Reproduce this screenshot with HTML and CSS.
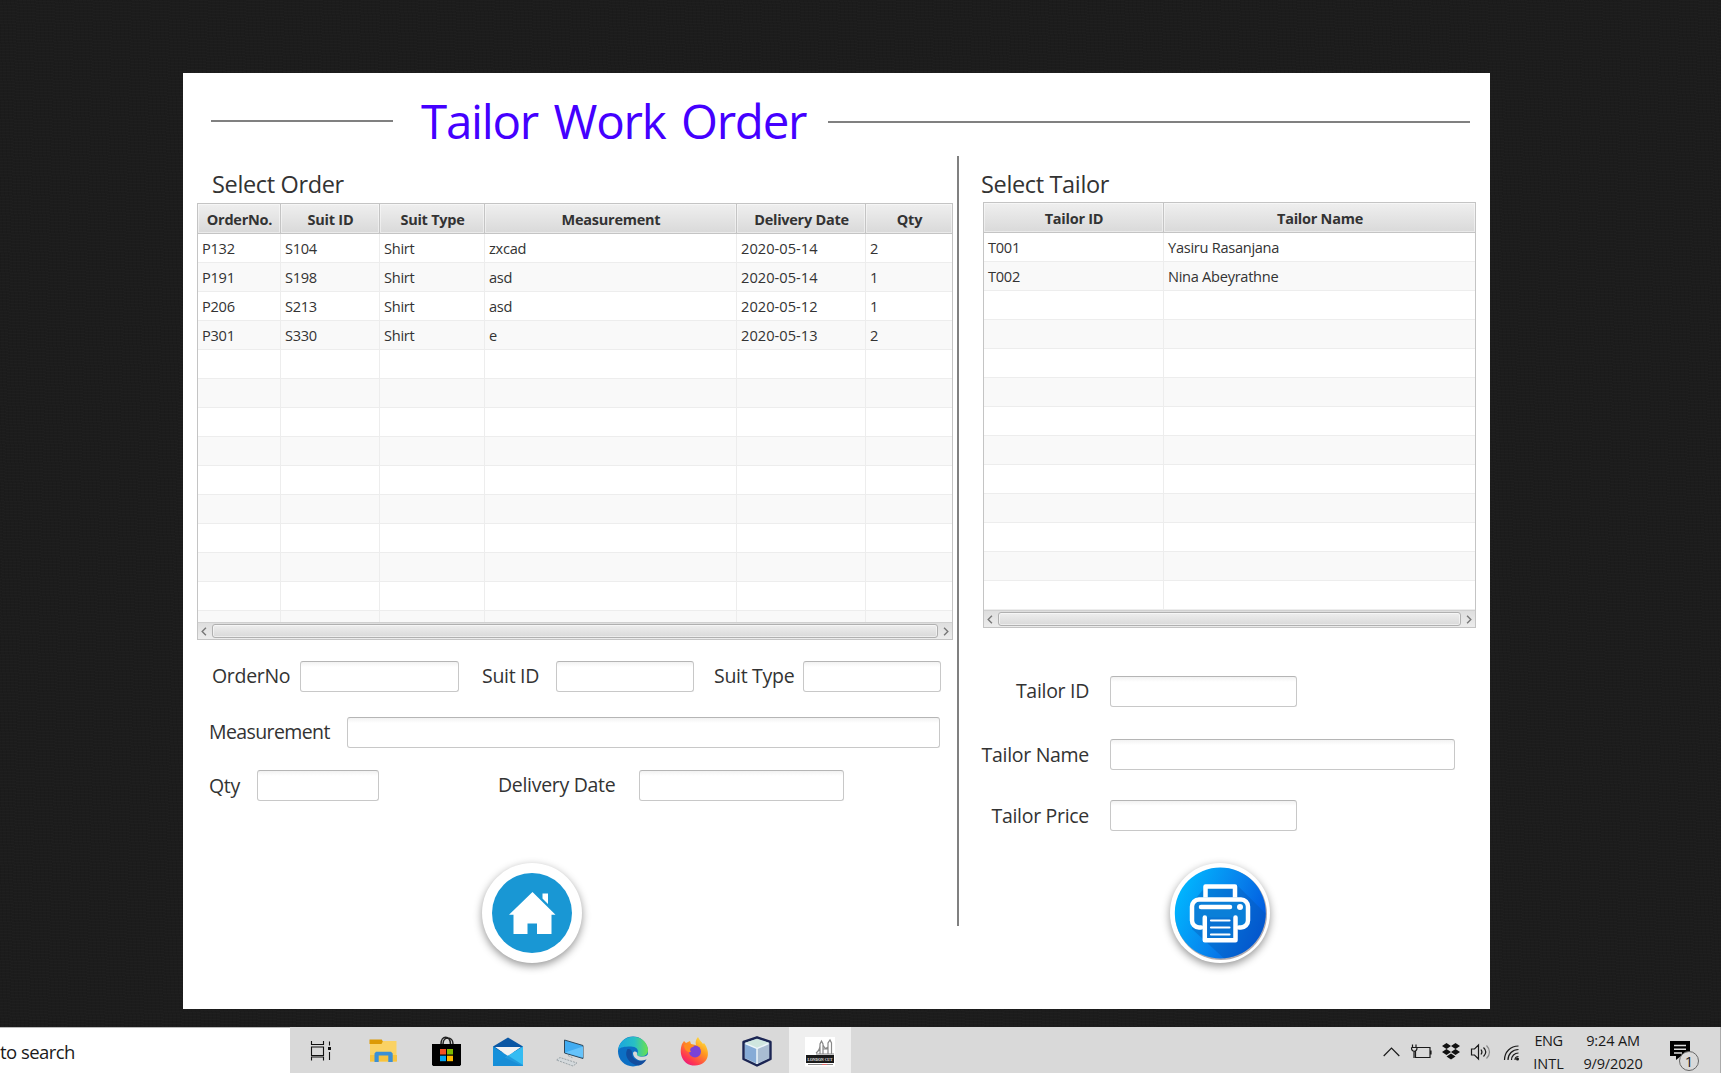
FILE: index.html
```html
<!DOCTYPE html>
<html lang="en">
<head>
<meta charset="utf-8">
<title>Tailor Work Order</title>
<link rel="stylesheet" href="styles.css">
</head>
<body>
<main class="desktop">
  <section class="window">
    <header class="title-bar">
      <span class="rule rule-left"></span>
      <h1 class="title">Tailor Work Order</h1>
      <span class="rule rule-right"></span>
    </header>
    <div class="panes">
      <section class="pane pane-order">
        <h2 class="heading heading-order">Select Order</h2>
        <div class="grid grid-order">
          <div class="grid-view">
            <table>
              <colgroup><col class="c-no"><col class="c-suit"><col class="c-type"><col class="c-measure"><col class="c-date"><col></colgroup>
              <thead><tr><th>OrderNo.<th>Suit ID<th>Suit Type<th>Measurement<th>Delivery Date<th>Qty</tr></thead>
              <tbody>
                <tr><td>P132<td>S104<td>Shirt<td>zxcad<td class="date">2020-05-14<td>2</tr>
                <tr><td>P191<td>S198<td>Shirt<td>asd<td class="date">2020-05-14<td>1</tr>
                <tr><td>P206<td>S213<td>Shirt<td>asd<td class="date">2020-05-12<td>1</tr>
                <tr><td>P301<td>S330<td>Shirt<td>e<td class="date">2020-05-13<td>2</tr>
                <tr><td><td><td><td><td><td></tr>
                <tr><td><td><td><td><td><td></tr>
                <tr><td><td><td><td><td><td></tr>
                <tr><td><td><td><td><td><td></tr>
                <tr><td><td><td><td><td><td></tr>
                <tr><td><td><td><td><td><td></tr>
                <tr><td><td><td><td><td><td></tr>
                <tr><td><td><td><td><td><td></tr>
                <tr><td><td><td><td><td><td></tr>
                <tr><td><td><td><td><td><td></tr>
              </tbody>
            </table>
          </div>
          <div class="scrollbar">
            <svg class="arrow" viewBox="0 0 14 16"><path d="M8 4L4 8l4 4"/></svg>
            <span class="thumb"></span>
            <svg class="arrow" viewBox="0 0 14 16"><path d="M6 4l4 4-4 4"/></svg>
          </div>
        </div>
        <form class="form-order">
          <div class="row row-ids">
            <label class="l-no">OrderNo</label><input class="i-no">
            <label class="l-suit">Suit ID</label><input class="i-suit">
            <label class="l-type">Suit Type</label><input class="i-type">
          </div>
          <div class="row row-measure">
            <label class="l-measure">Measurement</label><input class="i-measure">
          </div>
          <div class="row row-qty">
            <label class="l-qty">Qty</label><input class="i-qty">
            <label class="l-date">Delivery Date</label><input class="i-date">
          </div>
        </form>
        <button class="round home" aria-label="Home">
          <svg viewBox="0 0 100 100"><circle cx="50" cy="50" r="40" fill="#1997d4"/><path fill="#fff" d="M50.500 29L73.500 51.700H69.500V71H55V60.500H45.500V71H31.500V51.700H27zM60.500 30.500H66V41l-5.500-5.500z"/></svg>
        </button>
      </section>
      <span class="divider"></span>
      <section class="pane pane-tailor">
        <h2 class="heading heading-tailor">Select Tailor</h2>
        <div class="grid grid-tailor">
          <div class="grid-view">
            <table>
              <colgroup><col class="c-tid"><col></colgroup>
              <thead><tr><th>Tailor ID<th>Tailor Name</tr></thead>
              <tbody>
                <tr><td>T001<td>Yasiru Rasanjana</tr>
                <tr><td>T002<td>Nina Abeyrathne</tr>
                <tr><td><td></tr>
                <tr><td><td></tr>
                <tr><td><td></tr>
                <tr><td><td></tr>
                <tr><td><td></tr>
                <tr><td><td></tr>
                <tr><td><td></tr>
                <tr><td><td></tr>
                <tr><td><td></tr>
                <tr><td><td></tr>
                <tr><td><td></tr>
              </tbody>
            </table>
          </div>
          <div class="scrollbar">
            <svg class="arrow" viewBox="0 0 14 16"><path d="M8 4L4 8l4 4"/></svg>
            <span class="thumb"></span>
            <svg class="arrow" viewBox="0 0 14 16"><path d="M6 4l4 4-4 4"/></svg>
          </div>
        </div>
        <form class="form-tailor">
          <div class="row"><label>Tailor ID</label><input class="i-short"></div>
          <div class="row row-name"><label>Tailor Name</label><input class="i-long"></div>
          <div class="row row-price"><label>Tailor Price</label><input class="i-short"></div>
        </form>
        <button class="round print" aria-label="Print">
          <svg viewBox="0 0 100 100">
            <defs>
              <linearGradient id="pg" x1="0" y1=".3" x2="1" y2=".75"><stop offset="0" stop-color="#00b7ff"/><stop offset=".5" stop-color="#0786ee"/><stop offset="1" stop-color="#0052dc"/></linearGradient>
              <clipPath id="pc"><circle cx="50.300" cy="50" r="45.500"/></clipPath>
            </defs>
            <circle cx="51" cy="51" r="46" fill="#8d8790" opacity=".7"/>
            <circle cx="50.300" cy="50" r="45.500" fill="url(#pg)"/>
            <path clip-path="url(#pc)" fill="#0757b5" opacity=".4" d="M67 22L110 65V110H70L22 66V40L36 23z"/>
            <rect x="24" y="36" width="54" height="28" rx="8" fill="#0a7fd8"/>
            <g fill="none" stroke="#fff" stroke-width="4.500">
              <path d="M35.500 34.500V23.500H65v11" stroke-linejoin="round"/>
              <path d="M31 64.500h-2a7 7 0 0 1-7-7V43.500a7 7 0 0 1 7-7H71a7 7 0 0 1 7 7V57.500a7 7 0 0 1-7 7H69" stroke-linecap="round"/>
              <path d="M31 44H60" stroke-linecap="round"/>
              <path d="M34.800 54.500V77.200H65.500V54.500" fill="#0872d3" stroke-linecap="round" stroke-linejoin="round"/>
              <path d="M41 57.500H59.500M41 64.500H59.500M41 71.500H59.500" stroke-width="2.200" stroke-linecap="round"/>
            </g>
            <circle cx="70" cy="44" r="3" fill="#fff"/>
          </svg>
        </button>
      </section>
    </div>
  </section>
</main>
<footer class="taskbar">
  <div class="search">to search</div>
  <nav class="apps">
    <span class="app"><svg viewBox="0 0 32 32"><g fill="none" stroke="#111" stroke-width="1.100"><path d="M6.500 6v3.500H18.500V6M6.500 25.500V22H18.500v3.500M6.500 12h12v8.500h-12zM24.500 6.500v4M24.500 17v8"/></g><path d="M23 12h3v3h-3z" fill="#111"/></svg></span>
    <span class="app"><svg viewBox="0 0 32 32"><path fill="#fad264" d="M3 6h26.500v20.500H3z"/><path fill="#f7c33e" d="M3 20h27v6.500H3z"/><path fill="#dc9a05" d="M2.500 4.500h12.300l1 2-1.300 2.500h-12z"/><path fill="#3b90d6" d="M7.500 27V18.500l1.500-1.800h15l1.700 1.800V27h-4.400v-6.500h-9.600V27z"/></svg></span>
    <span class="app"><svg viewBox="0 0 32 32"><path fill="none" stroke="#222" stroke-width="1.500" d="M11 9c0-9 9-9 9.500 0M13 9c0-8 10-8 10 0"/><path d="M2 9h29v20.500l-1 1.500H3l-1-1.500z"/><path fill="#f25022" d="M10 14h6v5.500h-6z"/><path fill="#7fba00" d="M17 14h6v5.500h-6z"/><path fill="#00a4ef" d="M10 20.700h6v5.500h-6z"/><path fill="#ffb900" d="M17 20.700h6v5.500h-6z"/></svg></span>
    <span class="app"><svg viewBox="0 0 32 32"><path fill="#0b57a4" d="M1 11.500L16 2.500l15 9-4 6H5z"/><path fill="#f3f3f3" d="M3 12h26L16 21z"/><path fill="#1590da" d="M1 11.500l15 9.500 15-9.500V31H1z"/><path fill="#35bcf2" d="M31 11.500L13 22.500 30.500 31H31z"/><path fill="#1a8bd4" d="M16 20.500L31 30v1H1z" opacity=".7"/></svg></span>
    <span class="app"><svg viewBox="0 0 32 32"><path fill="#41acf2" stroke="#31485a" d="M10.500 5l18.500 5.500v13L10.500 18z"/><path d="M11 17.500l18-6v11z" fill="#66c3fa"/><path fill="#d4d9dc" stroke="#8b959b" stroke-width=".8" stroke-dasharray="2 1" d="M2.500 25L6 22.500 23 28l-4 3zM14 20.500l5 2.500"/></svg></span>
    <span class="app"><svg viewBox="0 0 32 32"><defs><linearGradient id="eg" x1="0" x2="1"><stop stop-color="#1aa5df"/><stop offset=".55" stop-color="#28bfc4"/><stop offset="1" stop-color="#6be24b"/></linearGradient></defs><circle cx="16" cy="16.500" r="15" fill="#0c6fc4"/><path fill="url(#eg)" d="M1.200 15C3-2 28-3 31 14c.6 5-3 7.500-7 7.500-3 0-5-1-4-2.500 3-5-2-8-7-7.500C8 11.500 3 12 1.200 15z"/><path fill="#124d9e" d="M10.500 14C6 22 14 30 22 30.500c4-1 6.500-4 7.500-6.500-7 4-15 1-14.500-6 .3-3-2-4.500-4.500-4z"/><path fill="#d9d9d9" d="M16 18c0-2 4.500-2.500 4 .8-.6 2 2 3 5 3 2.500 0 4.500-.8 6-2 1 3-1 4-2.500 5-6 2.500-12.500-1.500-12.500-6.800z"/></svg></span>
    <span class="app"><svg viewBox="0 0 32 32"><defs><linearGradient id="fg" x1=".9" y1="0" x2=".2" y2="1"><stop stop-color="#fff04a"/><stop offset=".4" stop-color="#ff9a1f"/><stop offset=".8" stop-color="#ff3750"/><stop offset="1" stop-color="#e4178a"/></linearGradient></defs><path fill="url(#fg)" d="M3 9l2-3 2 2 4-2 1 3 5 1c-1-3 0-6 2-8 1 3 4 5 5 7l1-1c7 9 5 22-9 22.500C5 31-1 20 3 9z"/><circle cx="16" cy="16.500" r="6" fill="#7a42d8"/><path fill="#ff8b20" d="M5 10c5-3 9 0 10 2-3 0-5 2-3 5-4 1-7-3-7-7z"/></svg></span>
    <span class="app"><svg viewBox="0 0 32 32"><path fill="#b9cddd" stroke="#1b2553" stroke-width="2.400" stroke-linejoin="round" d="M16 2.300L29.500 7v17L16 30.500 2.500 24V7z"/><path fill="#cfe6df" d="M4 7.800L16 4l12 3.800-12 5z"/><path fill="#86abd6" d="M4 8.500l12 5V28.500L4 23z"/><path fill="#a9bdd2" d="M28 8.500l-12 5V28.500L28 23z"/><path d="M16 13v16M4.500 8.500l11.500 5 11.500-5" stroke="#edf6fa" fill="none" stroke-width="1.500"/></svg></span>
    <span class="app active"><svg viewBox="0 0 32 32"><path fill="#fff" d="M1 2h30v29.500H1z"/><path fill="none" stroke="#888" stroke-width="1.200" d="M16 19V9l1.500-3L19 9v10M24 19V8l2-3 1.500 3v11M12 18c3-2 4-5 4-8M19 10c2 4 3 4 5 2M19 14h5M12 19h18"/><path fill="#1a1a1a" d="M2 20h28v8H2z"/><text class="logo-text" x="3.500" y="26" textLength="25" lengthAdjust="spacingAndGlyphs">LONDON CUT</text><path stroke="#888" d="M4 29.500h14"/><path stroke="#e06a6a" d="M18 29.500h5"/><path stroke="#888" d="M23 29.500h6"/></svg></span>
  </nav>
  <div class="tray">
    <svg class="tray-icons" viewBox="0 0 142 46" fill="none" stroke="#1a1a1a" stroke-width="1.200">
      <path d="M.700 29l7.800-8 7.800 8"/>
      <path d="M34 20.500h13v10H32.500V24M48 23.500v4M29.500 17.500v3M33 17.500v3M28.500 20.500h5.500c0 5-5.500 5-5.500 0M31 24v7"/>
      <path fill="#111" stroke="none" d="M63.500 16l4.500 3-4.500 3-4.500-3zM72.500 16l4.500 3-4.500 3-4.500-3zM63.500 22l4.500 3-4.500 3-4.500-3zM72.500 22l4.500 3-4.500 3-4.500-3zM68 26.500l4.500 3-4.500 3-4.500-3z"/>
      <path d="M88.500 22h3l4-4v14l-4-4h-3zM98 22.500c1.500 2 1.500 3 0 5M100.500 20.500c3 3 3 6 0 9"/><path stroke="#888" d="M103.500 18.500c4 4 4 9 0 13"/>
      <path d="M121.500 33c0-8 6-14 14-14M125 33c0-6 4.500-10.500 10.500-10.500M128.500 33c0-4 3-7 7-7M132 33c0-2 1.500-3.500 3.500-3.500"/><circle cx="134.500" cy="32" r="1.500" fill="#111" stroke="none"/>
    </svg>
    <div class="lang"><span class="eng">ENG</span><span>INTL</span></div>
    <div class="clock"><span>9:24 AM</span><span>9/9/2020</span></div>
    <div class="notice">
      <svg viewBox="0 0 32 32"><path d="M1 2h20v15h-9l-5 4v-4H1z"/><path stroke="#ddd" stroke-width="1.500" d="M5 6.500h12M5 10.200h12M5 13.900h8"/></svg>
      <span class="badge">1</span>
    </div>
  </div>
</footer>
</body>
</html>
```
FILE: styles.css
```css
* { box-sizing: border-box; }
body {
  margin: 0;
  width: 1721px;
  height: 1073px;
  overflow: hidden;
  display: flex;
  flex-direction: column;
  font-family: "Open Sans", "Noto Sans", sans-serif;
  color: #333;
}
.desktop {
  height: 1027px;
  padding: 73px 0 0 183px;
  background:
    repeating-linear-gradient(3deg, rgba(255,255,255,.012) 0 1px, transparent 1px 3px),
    repeating-linear-gradient(87deg, rgba(0,0,0,.06) 0 1px, transparent 1px 4px),
    #1c1c1c;
}
.window { width: 1307px; height: 936px; background: #fff; }
.title-bar { display: flex; height: 83px; padding-left: 28px; }
.rule { height: 2px; background: #808080; }
.rule-left { width: 182px; margin-top: 47px; }
.rule-right { width: 642px; margin-top: 48px; }
.title {
  width: 435px;
  margin: 12px 0 0;
  padding-left: 28px;
  font-size: 47.500px;
  line-height: 71px;
  font-weight: 400;
  letter-spacing: -1.250px;
  word-spacing: 4.500px;
  color: #40f;
  white-space: nowrap;
}
.panes { display: flex; }
.pane-order { width: 774px; padding-left: 14px; }
.divider { width: 2px; height: 770px; background: #808080; }
.pane-tailor { width: 531px; padding-left: 24px; }
.heading {
  margin: 0;
  font-size: 23.500px;
  line-height: 32px;
  font-weight: 400;
  letter-spacing: -.35px;
  white-space: nowrap;
}
.heading-order { height: 47px; padding: 12px 0 0 15px; }
.heading-tailor { height: 46px; margin-left: -2px; padding-top: 12px; }

.grid { border: 1px solid #c4c4c4; }
.grid-order { width: 756px; }
.grid-tailor { width: 493px; }
.grid-view { overflow: hidden; }
.grid-order .grid-view { height: 418px; }
.grid-tailor .grid-view { height: 407px; }
table { width: 100%; table-layout: fixed; border-collapse: separate; border-spacing: 0; }
.c-no { width: 83px; }
.c-suit { width: 99px; }
.c-type { width: 105px; }
.c-measure { width: 252px; }
.c-date { width: 129px; }
.c-tid { width: 180px; }
th, td { border: 0 solid #ededed; border-width: 0 1px 1px 0; white-space: nowrap; }
th {
  height: 30px;
  padding: 2px 0 0 1px;
  border-color: #c4c4c4;
  background: linear-gradient(#efefef, #d9d9d9);
  box-shadow: inset 0 0 0 1px rgba(255,255,255,.45);
  font-size: 14.500px;
  line-height: 20px;
  letter-spacing: -.25px;
}
td { height: 29px; padding: 0 0 0 4px; font-size: 14.600px; line-height: 20px; letter-spacing: -.28px; }
.date { letter-spacing: .05px; }
th:last-child, td:last-child { border-right: 0; }
tbody tr:nth-child(even) { background: #f9f9f9; }
.scrollbar {
  display: flex;
  height: 17px;
  padding: 1px 0 0;
  border-top: 1px solid #d0d0d0;
  background: linear-gradient(#dedede, #ececec);
}
.arrow { width: 14px; height: 15px; fill: none; stroke: #777; stroke-width: 1.500; }
.thumb {
  flex: 1;
  height: 14px;
  border: 1px solid #b0b0b0;
  border-radius: 3px;
  background: linear-gradient(#eee, #d9d9d9);
  box-shadow: inset 0 0 0 1px rgba(255,255,255,.5);
}

.row {
  display: flex;
  height: 31px;
  font-size: 19.500px;
  line-height: 29px;
  letter-spacing: -.3px;
  white-space: nowrap;
}
input {
  height: 31px;
  padding: 0 8px;
  border: 1px solid #c8c8c8;
  border-top-color: #b5b5b5;
  border-radius: 3px;
  background: linear-gradient(#f2f2f2, #fff 5px);
}
.form-order { padding: 21px 0 0 12px; }
.row-measure { margin-top: 25px; }
.row-qty { margin-top: 22px; }
.l-no { width: 91px; padding-left: 3px; }
.i-no { width: 159px; }
.l-suit { width: 97px; padding-left: 23px; }
.i-suit { width: 138px; }
.l-type { width: 109px; padding-left: 20px; }
.i-type { width: 138px; }
.l-measure { width: 138px; letter-spacing: -.6px; }
.i-measure { width: 593px; }
.l-qty { width: 48px; line-height: 31px; }
.i-qty { width: 122px; }
.l-date { width: 260px; padding-left: 119px; }
.i-date { width: 205px; }
.form-tailor { padding-top: 48px; }
.form-tailor label { display: flex; justify-content: flex-end; width: 106px; }
.form-tailor input { margin-left: 21px; }
.row-name { margin-top: 32px; line-height: 31px; }
.row-price { margin-top: 30px; line-height: 31px; }
.i-short { width: 187px; }
.i-long { width: 345px; }

.round {
  display: block;
  width: 100px;
  height: 100px;
  padding: 0;
  border: 0;
  border-radius: 50%;
  background: #fff;
  box-shadow: 0 3px 9px rgba(0,0,0,.42);
}
.round svg { display: block; width: 100px; height: 100px; }
.home { margin: 62px 0 0 285px; }
.print { margin: 32px 0 0 187px; }

.taskbar { display: flex; height: 46px; background: #d9d9d9; color: #1a1a1a; }
.search {
  width: 290px;
  height: 46px;
  border-top: 1px solid #bbb;
  background: #fff;
  font-size: 18.500px;
  line-height: 48px;
  letter-spacing: -.55px;
  white-space: nowrap;
}
.apps { display: flex; width: 561px; }
.app { display: flex; align-items: center; justify-content: center; flex: 1; height: 46px; padding-top: 2px; }
.app svg { width: 32px; height: 32px; overflow: visible; }
.active { background: #efefef; }
.logo-text { font: bold 5px "Liberation Serif", serif; fill: #eee; }
.tray { display: flex; flex: 1; padding-left: 532px; border-right: 1px solid #aaa; }
.tray-icons { width: 142px; height: 46px; }
.lang, .clock {
  display: flex;
  flex-direction: column;
  align-items: center;
  padding-top: 3px;
  font-size: 14.500px;
  line-height: 22.500px;
  white-space: nowrap;
}
.lang { width: 47px; }
.eng { letter-spacing: -.5px; }
.clock { width: 82px; letter-spacing: -.15px; }
.notice { position: relative; width: 40px; padding: 12px 0 0 15px; }
.notice svg { width: 32px; height: 32px; }
.badge {
  position: absolute;
  left: 25px;
  top: 24px;
  width: 20px;
  height: 20px;
  border: 1px solid #666;
  border-radius: 50%;
  background: #d9d9d9;
  font-size: 15px;
  line-height: 19px;
  text-align: center;
}
```
